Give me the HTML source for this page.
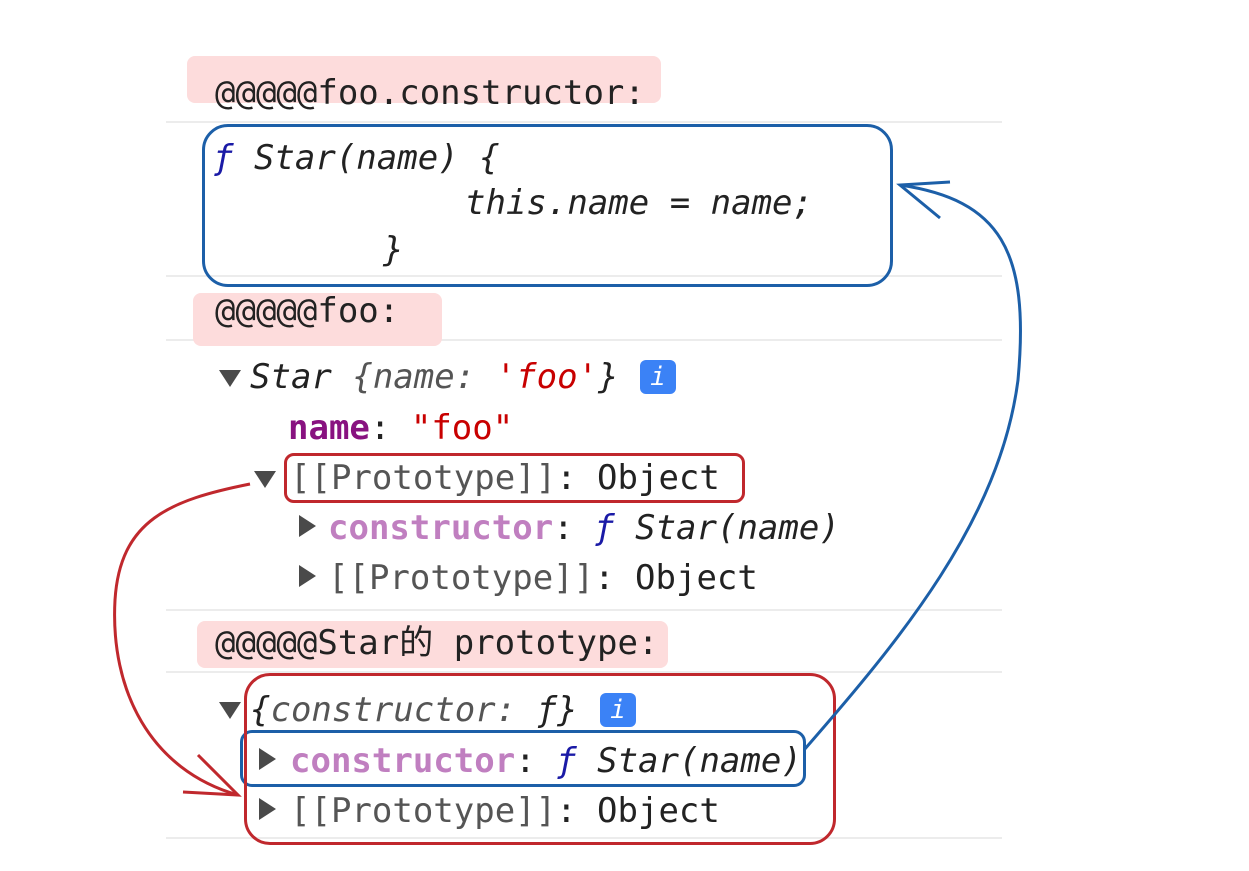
<!DOCTYPE html>
<html><head><meta charset="utf-8"><style>
body{margin:0;width:1249px;height:871px;background:#fff;position:relative;overflow:hidden;font-family:"DejaVu Sans Mono","Liberation Mono","Noto Sans CJK SC",monospace;font-size:34px;color:#222}
.t{position:absolute;line-height:34px;white-space:pre}
.sep{position:absolute;left:166px;width:836px;height:2px;background:#ececec}
.pk{position:absolute;background:#fddcdc;border-radius:8px}
.i{font-style:italic}
.k{color:#881280;font-weight:bold}
.s{color:#c80000}
.c{color:#c07fc0;font-weight:bold}
.f{color:#1a1aa6;font-style:italic}
.g{color:#555}
.tri{position:absolute;width:0;height:0}
.dn{border-left:11px solid transparent;border-right:11px solid transparent;border-top:17px solid #4a4a4a}
.rt{border-top:11px solid transparent;border-bottom:11px solid transparent;border-left:17px solid #4a4a4a}
.info{position:absolute;width:36px;height:34px;background:#3b82f6;border-radius:6px;color:#fff;font-size:26px;font-style:italic;text-align:center;line-height:34px}
.box{position:absolute;border-radius:26px;border:3px solid}
</style></head><body>
<div class="sep" style="top:121px"></div>
<div class="sep" style="top:275px"></div>
<div class="sep" style="top:339px"></div>
<div class="sep" style="top:609px"></div>
<div class="sep" style="top:671px"></div>
<div class="sep" style="top:837px"></div>

<div class="pk" style="left:187px;top:56px;width:474px;height:47px"></div>
<div class="t" style="left:215px;top:76px">@@@@@foo.constructor:</div>

<div class="t i" style="left:213px;top:141px"><span class="f">ƒ</span> Star(name) {</div>
<div class="t i" style="left:465px;top:186px">this.name = name;</div>
<div class="t i" style="left:383px;top:233px">}</div>
<div class="box" style="left:202px;top:124px;width:685px;height:157px;border-color:#1c5fa8"></div>

<div class="pk" style="left:193px;top:293px;width:249px;height:53px"></div>
<div class="t" style="left:215px;top:294px">@@@@@foo:</div>

<div class="tri dn" style="left:219px;top:370px"></div>
<div class="t i" style="left:250px;top:360px">Star <span class="g">{name: </span><span class="s">'foo'</span>}</div>
<div class="info" style="left:640px;top:360px">i</div>
<div class="t" style="left:288px;top:411px"><span class="k">name</span>: <span class="s">"foo"</span></div>
<div class="tri dn" style="left:254px;top:471px"></div>
<div class="t" style="left:290px;top:461px"><span class="g">[[Prototype]]</span>: Object</div>
<div class="box" style="left:284px;top:453px;width:455px;height:44px;border-radius:10px;border-color:#c0282d"></div>
<div class="tri rt" style="left:299px;top:515px"></div>
<div class="t" style="left:328px;top:511px"><span class="c">constructor</span>: <span class="f">ƒ</span> <span class="i">Star(name)</span></div>
<div class="tri rt" style="left:299px;top:565px"></div>
<div class="t" style="left:328px;top:561px"><span class="g">[[Prototype]]</span>: Object</div>

<div class="pk" style="left:197px;top:621px;width:471px;height:47px"></div>
<div class="t" style="left:215px;top:626px">@@@@@Star的 prototype:</div>

<div class="tri dn" style="left:219px;top:702px"></div>
<div class="t i" style="left:250px;top:693px">{<span class="g">constructor: </span>ƒ}</div>
<div class="info" style="left:600px;top:693px">i</div>
<div class="tri rt" style="left:259px;top:748px"></div>
<div class="t" style="left:290px;top:744px"><span class="c">constructor</span>: <span class="f">ƒ</span> <span class="i">Star(name)</span></div>
<div class="box" style="left:240px;top:730px;width:560px;height:51px;border-radius:12px;border-color:#1c5fa8"></div>
<div class="tri rt" style="left:259px;top:798px"></div>
<div class="t" style="left:290px;top:794px"><span class="g">[[Prototype]]</span>: Object</div>
<div class="box" style="left:244px;top:673px;width:586px;height:166px;border-color:#c0282d"></div>

<svg style="position:absolute;left:0;top:0" width="1249" height="871">
<path d="M804 750 C900 640 1000 520 1018 380 C1030 250 1000 200 900 185" fill="none" stroke="#1c5fa8" stroke-width="3"/>
<path d="M950 182 L900 185 L940 218" fill="none" stroke="#1c5fa8" stroke-width="3"/>
<path d="M250 484 C170 500 120 520 115 600 C110 690 150 770 238 795" fill="none" stroke="#c0282d" stroke-width="3"/>
<path d="M198 755 L238 795 L183 792" fill="none" stroke="#c0282d" stroke-width="3"/>
</svg>
</body></html>
